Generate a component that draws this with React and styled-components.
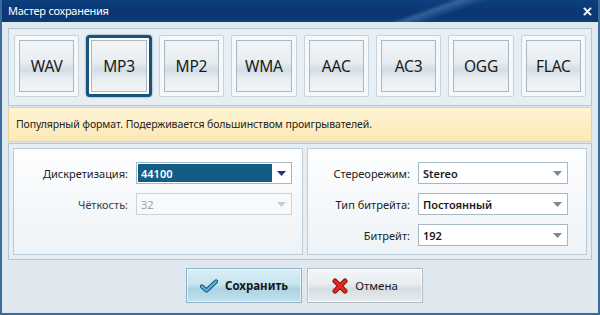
import React from "react";
import styled, { createGlobalStyle, css } from "styled-components";

const Global = createGlobalStyle`
  html, body { margin: 0; padding: 0; background: #ffffff; }
  body { font-family: "Noto Sans", "Open Sans", sans-serif; font-size: 11px; color: #1e1e1e; }
  * { box-sizing: border-box; }
`;

const Window = styled.div`
  width: 600px;
  height: 315px;
  display: flex;
  flex-direction: column;
  background: #dfe8ef;
  border: 2px solid #3c6a9a;
  border-top: none;
  overflow: hidden;
`;

const TitleBar = styled.div`
  height: 22px;
  margin: 0 -2px;
  display: flex;
  align-items: center;
  justify-content: space-between;
  padding: 0 8px 1px;
  color: #ffffff;
  font-size: 11px;
  letter-spacing: -0.25px;
  background:
    linear-gradient(160deg, transparent 68%, rgba(120, 170, 220, 0.35) 70%, transparent 74%),
    linear-gradient(#0d3f7e, #0a3672 60%, #0c3b78);
`;

const Close = styled.span`
  font-family: "DejaVu Sans", sans-serif;
  font-weight: bold;
  font-size: 14px;
  line-height: 1;
  margin-right: -1px;
`;

const Body = styled.div`
  flex: 1;
  display: flex;
  flex-direction: column;
  padding: 6px 6px 0;
`;

const Strip = styled.div`
  height: 78px;
  border: 1px solid #b3c6d4;
  background: #e8eff4;
  padding: 6px 5px;
  display: grid;
  grid-template-columns: repeat(8, 1fr);
  gap: 7px;
`;

const Tile = styled.div`
  height: 62px;
  padding: 4px;
  background: #f6f9fb;
  border: 1px solid #c6d4de;
  border-radius: 2px;
  display: flex;
  ${(p) =>
    p.$active &&
    css`
      padding: 2px;
      background: #ffffff;
      border: 3px solid #1b5279;
      border-radius: 4px;
      box-shadow: 0 0 2px rgba(20, 70, 110, 0.7);
    `}
`;

const FormatButton = styled.div`
  flex: 1;
  display: flex;
  align-items: center;
  justify-content: center;
  border: 1px solid #a9b9c5;
  background: linear-gradient(#f2f5f7 0%, #e8edf1 42%, #d2dde4 58%, #e6ecf0 72%, #f1f4f6 100%);
  font-size: 15.5px;
  color: #1a1a1a;
  letter-spacing: -0.2px;
`;

const Info = styled.div`
  height: 35px;
  margin-top: 1px;
  border: 1px solid #ead195;
  background: linear-gradient(#fef4d4, #fce8b6);
  display: flex;
  align-items: center;
  padding: 0 7px 2px;
  font-size: 10.5px;
  letter-spacing: -0.1px;
  color: #222;
`;

const Group = styled.div`
  height: 117px;
  margin-top: 1px;
  border: 1px solid #b3c6d4;
  background: #e6eef4;
  padding: 4px;
  display: grid;
  grid-template-columns: 290px 1fr;
  gap: 4px;
`;

const Panel = styled.div`
  border: 1px solid #bccdd9;
  background: linear-gradient(#fdfeff, #eef3f7);
  padding: 13px ${(p) => p.$right}px 0 0;
  display: grid;
  grid-template-columns: ${(p) => p.$label}px 1fr;
  column-gap: 8px;
  row-gap: 9px;
  align-content: start;
`;

const Label = styled.div`
  height: 22px;
  display: flex;
  align-items: center;
  justify-content: flex-end;
  color: ${(p) => (p.$disabled ? "#3a3a3a" : "#222")};
`;

const Combo = styled.div`
  height: 22px;
  border: 1px solid ${(p) => (p.$disabled ? "#c9d3da" : "#a7b8c5")};
  background: ${(p) => (p.$disabled ? "#f7f9fa" : "#ffffff")};
  display: flex;
  align-items: stretch;
  padding: 1px;
`;

const ComboValue = styled.div`
  flex: 1;
  display: flex;
  align-items: center;
  padding-left: 3px;
  font-weight: ${(p) => (p.$disabled ? 400 : 600)};
  color: ${(p) => (p.$disabled ? "#9aa3a9" : p.$selected ? "#ffffff" : "#1a1a1a")};
  background: ${(p) => (p.$selected ? "#125c86" : "transparent")};
`;

const Arrow = styled.div`
  width: 18px;
  display: flex;
  align-items: center;
  justify-content: center;
`;

const Footer = styled.div`
  display: flex;
  justify-content: center;
  gap: 5px;
  padding-top: 8px;
  padding-left: 9px;
`;

const ActionButton = styled.div`
  width: 116px;
  height: 35px;
  display: flex;
  align-items: center;
  justify-content: center;
  gap: 7px;
  font-size: 11.5px;
  border: 1px solid ${(p) => (p.$primary ? "#8fb1c3" : "#b3c0ca")};
  background: ${(p) =>
    p.$primary
      ? "linear-gradient(#d9eef6 0%, #c8e4ef 45%, #acd3e3 60%, #c3e1ed 100%)"
      : "linear-gradient(#f4f6f8 0%, #e9edf0 45%, #d6dde2 60%, #e8ecef 100%)"};
  font-weight: ${(p) => (p.$primary ? 700 : 400)};
  color: #161616;
  box-shadow: inset 0 0 0 1px rgba(255, 255, 255, 0.6);
`;

const formats = ["WAV", "MP3", "MP2", "WMA", "AAC", "AC3", "OGG", "FLAC"];

function ArrowIcon({ color }) {
  return (
    <svg width="9" height="5" viewBox="0 0 9 5">
      <path d="M0 0 H9 L4.5 5 Z" fill={color} />
    </svg>
  );
}

function Field({ label, value, selected, disabled }) {
  return (
    <>
      <Label $disabled={disabled}>{label}</Label>
      <Combo $disabled={disabled}>
        <ComboValue $selected={selected} $disabled={disabled}>{value}</ComboValue>
        <Arrow>
          <ArrowIcon color={selected ? "#1c3a6a" : disabled ? "#c5ccd1" : "#7d8a94"} />
        </Arrow>
      </Combo>
    </>
  );
}

function CheckIcon() {
  return (
    <svg width="18" height="14" viewBox="0 0 18 14">
      <path d="M2 7.5 L6.5 11.5 L16 2.5" fill="none" stroke="#1d4e78" strokeWidth="4.2" strokeLinecap="round" strokeLinejoin="round" />
      <path d="M2 7.5 L6.5 11.5 L16 2.5" fill="none" stroke="#4fb8e8" strokeWidth="2.2" strokeLinecap="round" strokeLinejoin="round" />
    </svg>
  );
}

function CrossIcon() {
  return (
    <svg width="16" height="16" viewBox="0 0 16 16">
      <path d="M3 3 L13 13 M13 3 L3 13" fill="none" stroke="#8f1010" strokeWidth="5" strokeLinecap="round" />
      <path d="M3 3 L13 13 M13 3 L3 13" fill="none" stroke="#e02a22" strokeWidth="3" strokeLinecap="round" />
    </svg>
  );
}

export default function App() {
  return (
    <>
      <Global />
      <Window>
        <TitleBar>
          <span>Мастер сохранения</span>
          <Close>×</Close>
        </TitleBar>
        <Body>
          <Strip>
            {formats.map((f) => (
              <Tile key={f} $active={f === "MP3"}>
                <FormatButton>{f}</FormatButton>
              </Tile>
            ))}
          </Strip>
          <Info>Популярный формат. Подерживается большинством проигрывателей.</Info>
          <Group>
            <Panel $label={114} $right={10}>
              <Field label="Дискретизация:" value="44100" selected />
              <Field label="Чёткость:" value="32" disabled />
            </Panel>
            <Panel $label={102} $right={18}>
              <Field label="Стереорежим:" value="Stereo" />
              <Field label="Тип битрейта:" value="Постоянный" />
              <Field label="Битрейт:" value="192" />
            </Panel>
          </Group>
          <Footer>
            <ActionButton $primary>
              <CheckIcon />
              Сохранить
            </ActionButton>
            <ActionButton>
              <CrossIcon />
              Отмена
            </ActionButton>
          </Footer>
        </Body>
      </Window>
    </>
  );
}
